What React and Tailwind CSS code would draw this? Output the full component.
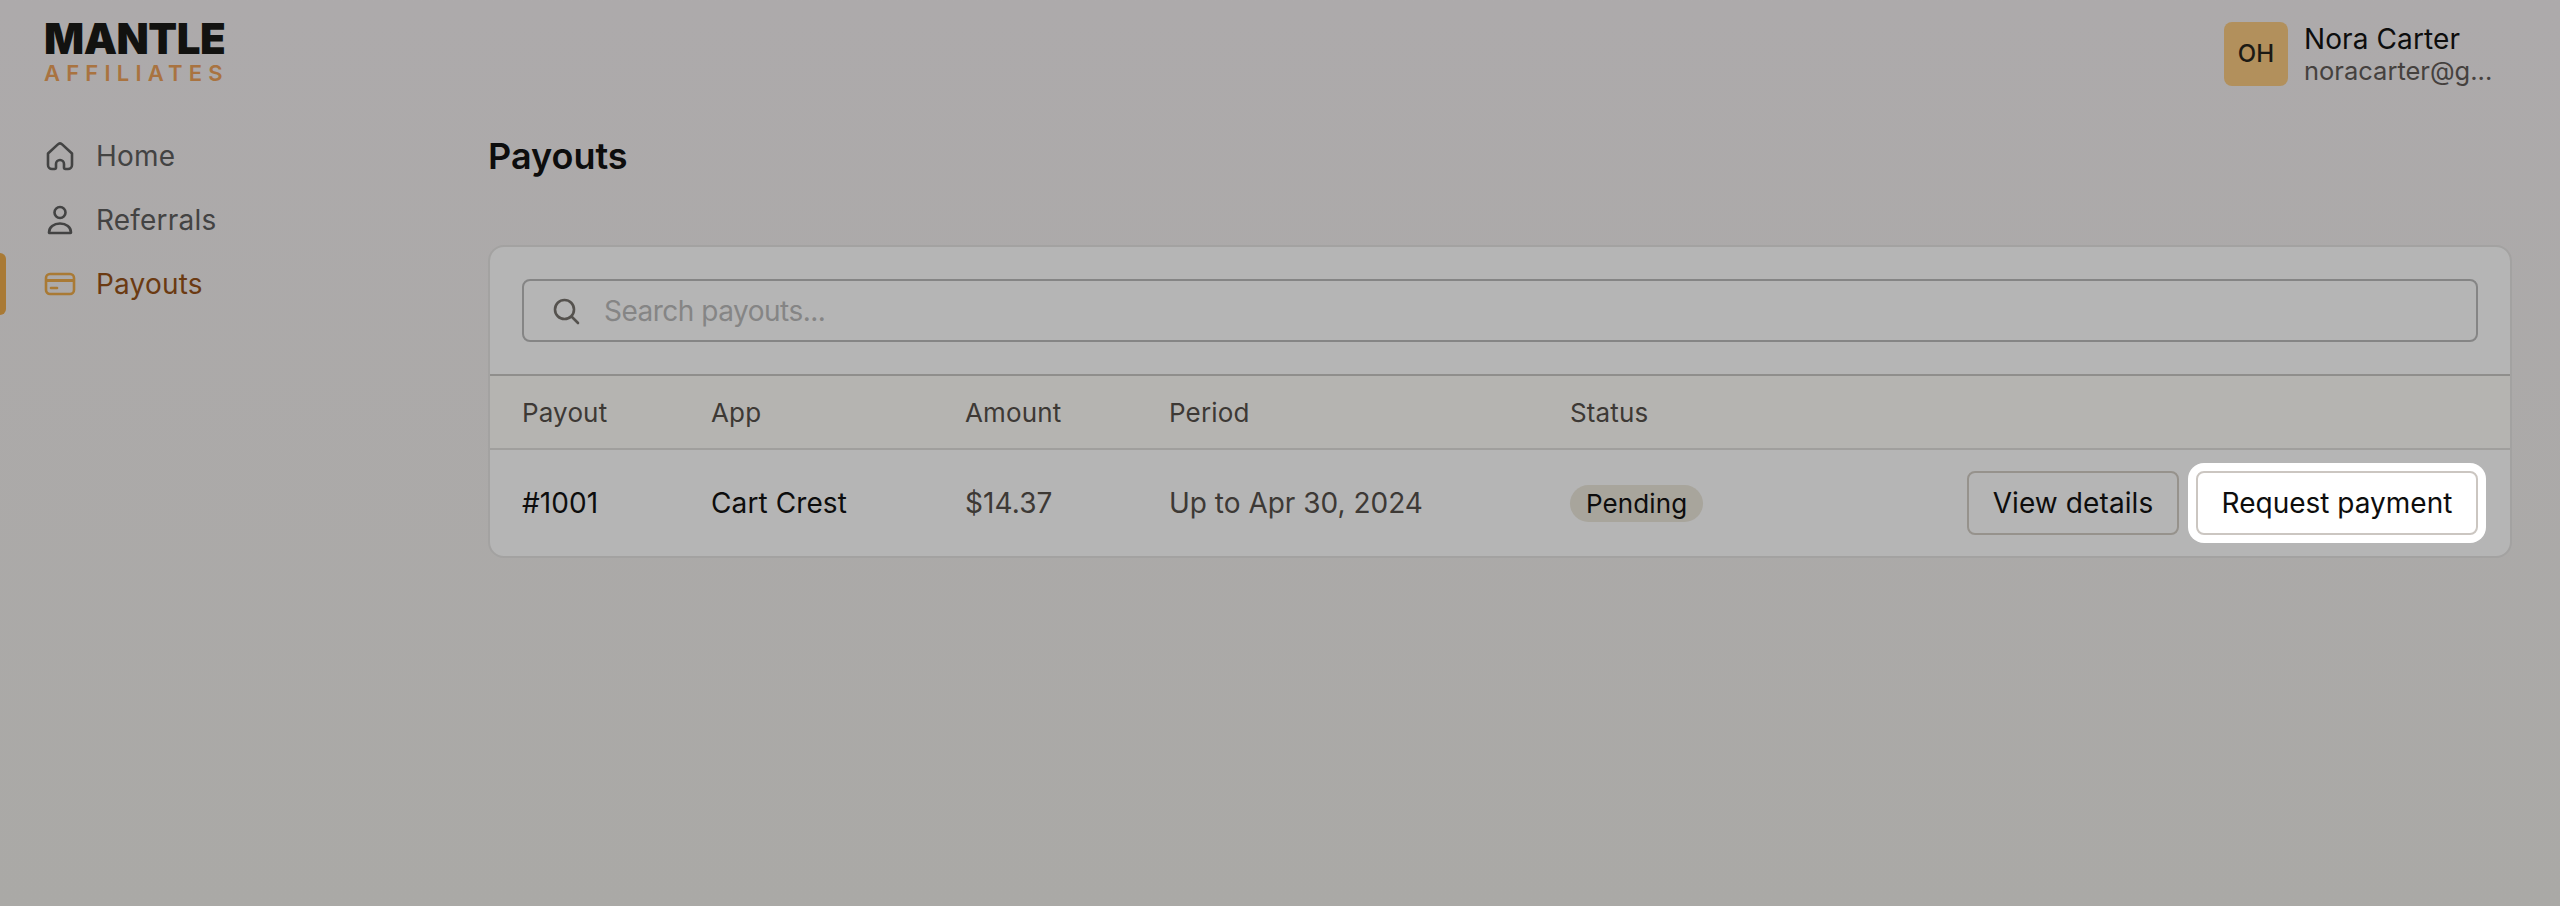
const font = { fontFamily: "Inter, sans-serif" };

function HomeIcon() {
  return (
    <svg width="32" height="32" viewBox="0 0 32 32" fill="none" stroke="currentColor" strokeWidth="2.6" strokeLinejoin="round" strokeLinecap="round">
      <path d="M4 13.5 13.6 4.6a3.5 3.5 0 0 1 4.8 0L28 13.5V25a4 4 0 0 1-4 4h-2.5a1.5 1.5 0 0 1-1.5-1.5V24a4 4 0 0 0-8 0v3.5a1.5 1.5 0 0 1-1.5 1.5H8a4 4 0 0 1-4-4Z" />
    </svg>
  );
}

function PersonIcon() {
  return (
    <svg width="32" height="32" viewBox="0 0 32 32" fill="none" stroke="currentColor" strokeWidth="2.6" strokeLinejoin="round">
      <circle cx="16" cy="8.5" r="5.5" />
      <path d="M5 28.5c0-5.5 4.8-9 11-9s11 3.5 11 9c0 .3-.2.5-.5.5h-21c-.3 0-.5-.2-.5-.5Z" />
    </svg>
  );
}

function CardIcon() {
  return (
    <svg width="32" height="32" viewBox="0 0 32 32" fill="none" stroke="currentColor" strokeWidth="2.6" strokeLinecap="round">
      <rect x="2" y="6" width="28" height="20" rx="4" />
      <path d="M2 12.5h28" strokeLinecap="butt" strokeWidth="3" />
      <path d="M7 20h6" />
    </svg>
  );
}

function SearchIcon() {
  return (
    <svg width="30" height="30" viewBox="0 0 30 30" fill="none" stroke="currentColor" strokeWidth="2.6" strokeLinecap="round">
      <circle cx="13.5" cy="13.5" r="9.5" />
      <path d="m21 21 6 6" />
    </svg>
  );
}

function NavItem({ icon, label, active }) {
  return (
    <div className="relative flex h-16 items-center pl-11">
      {active && <div className="absolute left-0 top-px h-[62px] w-1.5 rounded-r-md bg-[#a97a35]" />}
      <span className={active ? "w-[52px] text-[#a97a35]" : "w-[52px] text-[#434343]"}>{icon}</span>
      <span className={active ? "text-[28px] tracking-[0.2px] text-[#6b3a12]" : "text-[28px] tracking-[0.2px] text-[#434343]"}>{label}</span>
    </div>
  );
}

export default function App() {
  return (
    <div style={font} className="flex h-[906px] w-[2560px] flex-col overflow-hidden bg-gradient-to-b from-[#adaaab] to-[#aaa9a6] text-[#0d0d0d]">
      <header className="flex h-[110px] shrink-0 justify-between pl-11 pr-[49px] pt-[21px]">
        <div className="flex flex-col">
          <span className="text-[42px] font-black leading-[36px] tracking-[-0.5px] text-[#121210]">MANTLE</span>
          <span className="mt-[4px] text-[22px] font-semibold leading-6 tracking-[6.2px] text-[#a97340]">AFFILIATES</span>
        </div>
        <div className="flex items-start gap-4 pt-px">
          <div className="flex h-16 w-16 items-center justify-center rounded-lg bg-[#b2905c] text-2xl font-medium text-[#1c1a14]">OH</div>
          <div className="flex w-[207px] flex-col pt-px">
            <span className="text-[28px] leading-8 tracking-[0.1px]">Nora Carter</span>
            <span className="text-[25.5px] leading-8 text-[#45413e]">noracarter@g...</span>
          </div>
        </div>
      </header>
      <div className="flex flex-1">
        <nav className="w-[488px] shrink-0 pt-[14px]">
          <NavItem icon={<HomeIcon />} label="Home" />
          <NavItem icon={<PersonIcon />} label="Referrals" />
          <NavItem active icon={<CardIcon />} label="Payouts" />
        </nav>
        <main className="flex-1 pr-[48px] pt-[26px]">
          <h1 className="text-[36px] font-semibold leading-10">Payouts</h1>
          <section className="mt-[69px] overflow-hidden rounded-2xl border-2 border-[#a3a2a1] bg-[#b5b5b5]">
            <div className="px-8 pb-8 pt-[32px]">
              <div className="flex h-[63px] items-center rounded-lg border-2 border-[#858585] pl-[27px]">
                <span className="text-[#55524e]"><SearchIcon /></span>
                <span className="ml-[23px] text-[28px] tracking-[-0.5px] text-[#858585]">Search payouts...</span>
              </div>
            </div>
            <div className="flex h-[76px] items-center border-y-2 border-t-[#8f8e8c] border-b-[#a09f9d] bg-[#b5b4b1] pl-8 text-[26px] tracking-[0.15px] text-[#3d3935]">
              <span className="w-[189px]">Payout</span>
              <span className="w-[254px]">App</span>
              <span className="w-[204px]">Amount</span>
              <span className="w-[401px]">Period</span>
              <span>Status</span>
            </div>
            <div className="flex h-[106px] items-center pl-8 pr-8 text-[28px] tracking-[0.1px]">
              <span className="w-[189px]">#1001</span>
              <span className="w-[254px]">Cart Crest</span>
              <span className="w-[204px] text-[#3d3935]">$14.37</span>
              <span className="w-[401px] tracking-normal text-[#3d3935]">Up to Apr 30, 2024</span>
              <span className="rounded-full bg-[#a8a59c] px-4 text-[26px] leading-[37px]">Pending</span>
              <div className="ml-auto flex gap-[17px]">
                <button className="h-[64px] w-[212px] rounded-lg border-2 border-[#96928c] text-[28px]">View details</button>
                <button className="h-[64px] w-[282px] rounded-lg border-2 border-[#cbc6c1] bg-white text-[28px] tracking-normal ring-[8px] ring-white">Request payment</button>
              </div>
            </div>
          </section>
        </main>
      </div>
    </div>
  );
}
